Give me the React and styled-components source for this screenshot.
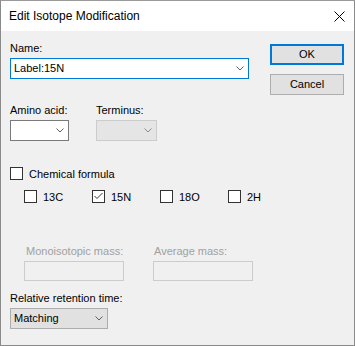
import React from "react";
import styled, { createGlobalStyle } from "styled-components";

const GlobalStyle = createGlobalStyle`
  html, body {
    margin: 0;
    padding: 0;
    background: #ffffff;
  }
  * {
    box-sizing: border-box;
  }
`;

const Window = styled.div`
  width: 355px;
  height: 346px;
  border: 1px solid #8a8a8a;
  border-top-color: #9a9a9a;
  display: flex;
  flex-direction: column;
  font-family: "Liberation Sans", Arial, sans-serif;
  font-size: 11px;
  color: #000;
  background: #f0f0f0;
`;

const TitleBar = styled.div`
  height: 30px;
  background: #ffffff;
  display: flex;
  align-items: center;
  justify-content: space-between;
  padding: 0 9px 0 8px;
  font-size: 12px;
  flex-shrink: 0;
`;

const Body = styled.div`
  flex: 1;
  display: flex;
  padding: 10px 10px 0 9px;
`;

const LeftCol = styled.div`
  width: 250px;
  display: flex;
  flex-direction: column;
`;

const RightCol = styled.div`
  margin-left: 10px;
  padding-top: 3px;
  display: flex;
  flex-direction: column;
  gap: 9px;
`;

const Label = styled.div`
  height: 15px;
  line-height: 15px;
  margin-top: ${(p) => p.top || 0}px;
  margin-bottom: 2px;
  padding-left: ${(p) => p.inset || 0}px;
  color: ${(p) => (p.disabled ? "#a0a0a0" : "#000")};
  white-space: nowrap;
`;

const Combo = styled.div`
  width: ${(p) => p.width}px;
  height: 21px;
  border: 1px solid ${(p) => (p.focused ? "#0078d7" : p.disabled ? "#cccccc" : p.button ? "#adadad" : "#7a7a7a")};
  background: ${(p) => (p.disabled ? "#e5e5e5" : p.button ? "#e1e1e1" : "#ffffff")};
  display: flex;
  align-items: center;
  justify-content: space-between;
  padding: 0 4px 0 3px;
  line-height: 19px;
  flex-shrink: 0;
`;

const TextBox = styled.div`
  width: ${(p) => p.width}px;
  height: 20px;
  border: 1px solid #cccccc;
  background: #f0f0f0;
`;

const Row = styled.div`
  display: flex;
  margin-top: ${(p) => p.top || 0}px;
  padding-left: ${(p) => p.indent || 0}px;
`;

const Field = styled.div`
  width: ${(p) => p.width}px;
  flex-shrink: 0;
  display: flex;
  flex-direction: column;
`;

const CheckRow = styled.div`
  display: flex;
  margin-top: ${(p) => p.top || 0}px;
  padding-left: ${(p) => p.indent || 0}px;
`;

const Check = styled.label`
  display: flex;
  align-items: center;
  height: 15px;
  width: ${(p) => (p.width ? `${p.width}px` : "auto")};
  flex-shrink: 0;
  gap: ${(p) => p.gap || 6}px;
  white-space: nowrap;
`;

const Box = styled.span`
  width: 13px;
  height: 13px;
  border: 1px solid #333333;
  background: #ffffff;
  display: flex;
  align-items: center;
  justify-content: center;
  flex-shrink: 0;
`;

const Button = styled.button`
  width: 74px;
  height: 21px;
  font: inherit;
  color: #000;
  background: #e1e1e1;
  border: ${(p) => (p.primary ? "2px solid #0078d7" : "1px solid #adadad")};
  padding: 0;
  line-height: 17px;
`;

const Chevron = ({ color = "#606060" }) => (
  <svg width="8" height="5" viewBox="0 0 8 5">
    <path d="M0.5 0.5 L4 4 L7.5 0.5" fill="none" stroke={color} strokeWidth="1" />
  </svg>
);

const CloseIcon = () => (
  <svg width="11" height="11" viewBox="0 0 11 11">
    <path d="M0.5 0.5 L10.5 10.5 M10.5 0.5 L0.5 10.5" stroke="#000" strokeWidth="1" />
  </svg>
);

const CheckMark = () => (
  <svg width="11" height="11" viewBox="0 0 11 11">
    <path d="M1.5 5 L4 7.5 L9.5 2" fill="none" stroke="#333" strokeWidth="1" />
  </svg>
);

const isotopes = [
  { name: "13C", checked: false },
  { name: "15N", checked: true },
  { name: "18O", checked: false },
  { name: "2H", checked: false },
];

export default function App() {
  return (
    <>
      <GlobalStyle />
      <Window>
        <TitleBar>
          <span>Edit Isotope Modification</span>
          <CloseIcon />
        </TitleBar>
        <Body>
          <LeftCol>
            <Label>Name:</Label>
            <Combo width={239} focused>
              <span>Label:15N</span>
              <Chevron />
            </Combo>

            <Row top={24}>
              <Field width={86}>
                <Label>Amino acid:</Label>
                <Combo width={59}>
                  <span />
                  <Chevron />
                </Combo>
              </Field>
              <Field width={61}>
                <Label>Terminus:</Label>
                <Combo width={61} disabled>
                  <span />
                  <Chevron color="#8a8a8a" />
                </Combo>
              </Field>
            </Row>

            <CheckRow top={25}>
              <Check gap={6}>
                <Box />
                Chemical formula
              </Check>
            </CheckRow>

            <CheckRow top={8} indent={14}>
              {isotopes.map((iso) => (
                <Check key={iso.name} width={68}>
                  <Box>{iso.checked && <CheckMark />}</Box>
                  {iso.name}
                </Check>
              ))}
            </CheckRow>

            <Row top={40} indent={14}>
              <Field width={129}>
                <Label disabled inset={2}>Monoisotopic mass:</Label>
                <TextBox width={100} />
              </Field>
              <Field width={100}>
                <Label disabled inset={1}>Average mass:</Label>
                <TextBox width={100} />
              </Field>
            </Row>

            <Label top={10}>Relative retention time:</Label>
            <Combo width={98} button>
              <span>Matching</span>
              <Chevron />
            </Combo>
          </LeftCol>
          <RightCol>
            <Button primary>OK</Button>
            <Button>Cancel</Button>
          </RightCol>
        </Body>
      </Window>
    </>
  );
}
